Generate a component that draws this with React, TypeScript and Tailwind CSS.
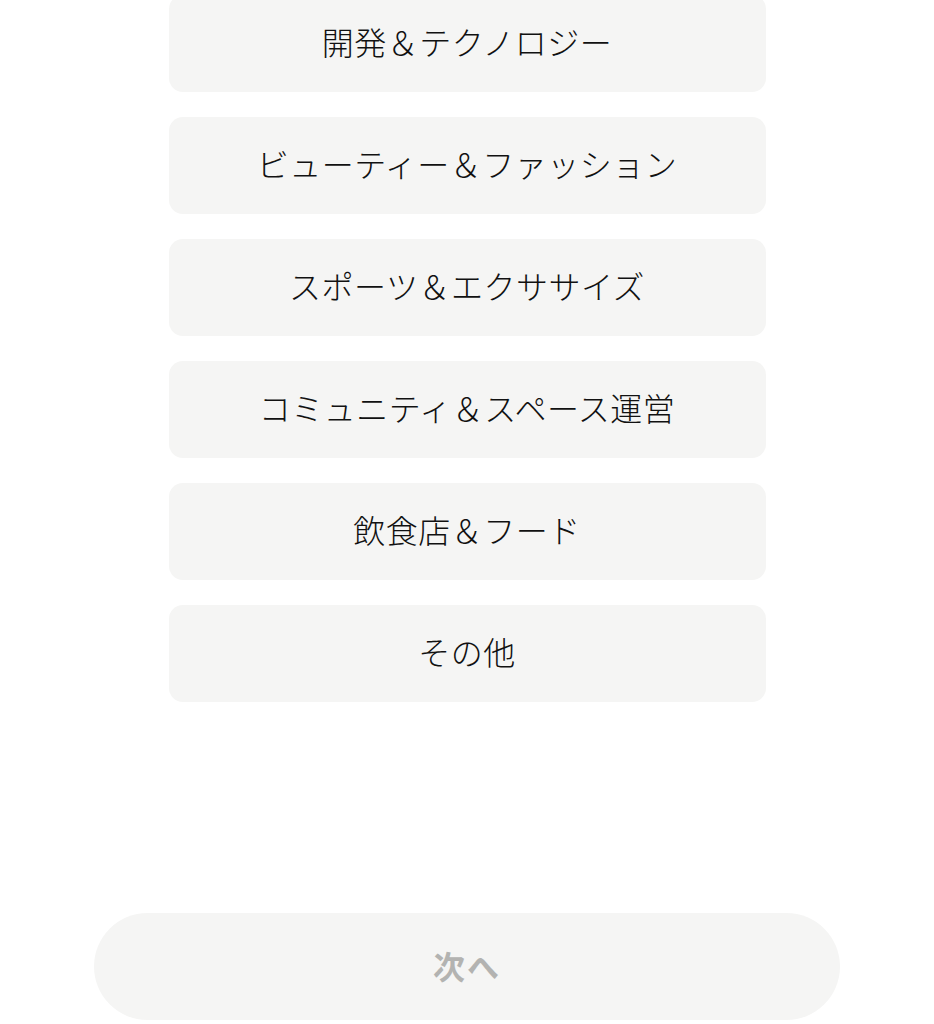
const CATEGORIES = [
  "開発＆テクノロジー",
  "ビューティー＆ファッション",
  "スポーツ＆エクササイズ",
  "コミュニティ＆スペース運営",
  "飲食店＆フード",
  "その他",
];

const FONT = "font-['Noto_Sans_CJK_JP','Noto_Sans',sans-serif]";

function CategoryCard({ label }: { label: string }) {
  return (
    <button
      type="button"
      className="flex h-[97px] w-[597px] items-center justify-center rounded-[14px] bg-[#f5f5f4] pb-[6px] text-[32px] font-light leading-none tracking-[0.5px] text-[#111111]"
    >
      {label}
    </button>
  );
}

export default function App() {
  return (
    <div className={`h-[1024px] w-full overflow-hidden bg-white ${FONT}`}>
      {/* Category list (first card scrolled partly out of view) */}
      <div className="-mt-[5px] flex flex-col items-center gap-[25px]">
        {CATEGORIES.map((c) => (
          <CategoryCard key={c} label={c} />
        ))}
      </div>

      {/* Next button (disabled) */}
      <div className="mt-[211px] flex justify-center">
        <button
          type="button"
          disabled
          className="flex h-[107px] w-[746px] items-center justify-center rounded-full bg-[#f5f5f4] pb-[4px] text-[32px] font-bold leading-none tracking-[2px] text-[#b3b3b1]"
        >
          次へ
        </button>
      </div>
    </div>
  );
}
